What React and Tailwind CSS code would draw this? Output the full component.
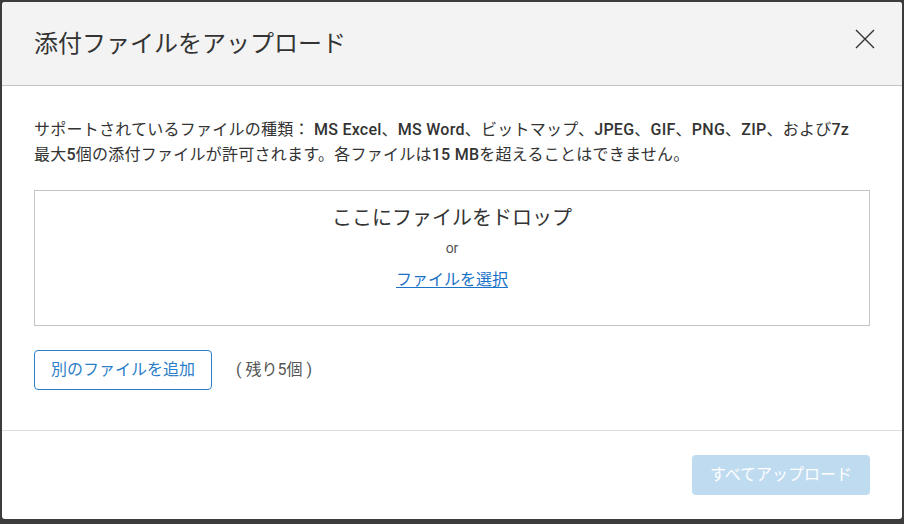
export default function App() {
  const font = "font-['Roboto','Noto_Sans_CJK_JP',sans-serif]";
  return (
    <div className={`w-[904px] h-[524px] bg-[#3c3c3c] pt-[2px] pl-[2px] ${font}`}>
      <div className="w-[900px] h-[517px] bg-white rounded-[3px] overflow-hidden flex flex-col">
        <div className="h-[84px] shrink-0 bg-[#f3f3f3] border-b border-[#c4c4c4] flex items-center justify-between pl-[32px] pr-[26px]">
          <h1 className="text-[24px] text-[#333] font-normal leading-none mt-[1px]">添付ファイルをアップロード</h1>
          <svg width="22" height="22" viewBox="0 0 22 22" className="-mt-[10px]" aria-label="閉じる">
            <path d="M2 2 L20 20 M20 2 L2 20" stroke="#333" strokeWidth="1.4" fill="none" />
          </svg>
        </div>
        <div className="pt-[31px] px-[32px] pb-[40px] border-b border-[#dddddd]">
          <div className="text-[16px] leading-[25px] text-[#333] tracking-[0.25px]">
            <p>
              サポートされているファイルの種類： <b className="font-medium">MS Excel</b>、<b className="font-medium">MS Word</b>、ビットマップ、<b className="font-medium">JPEG</b>、<b className="font-medium">GIF</b>、<b className="font-medium">PNG</b>、<b className="font-medium">ZIP</b>、および<b className="font-medium">7z</b>
            </p>
            <p>
              最大<b className="font-medium">5</b>個の添付ファイルが許可されます。各ファイルは<b className="font-medium">15 MB</b>を超えることはできません。
            </p>
          </div>
          <div className="mt-[23px] h-[136px] border border-[#c4c4c4] flex flex-col items-center pt-[13px]">
            <div className="text-[20px] leading-[28px] text-[#333]">ここにファイルをドロップ</div>
            <div className="mt-[6px] text-[14px] leading-[20px] text-[#555]">or</div>
            <a href="#" className="mt-[12px] text-[16px] leading-[20px] text-[#1a73c7] underline underline-offset-2">ファイルを選択</a>
          </div>
          <div className="mt-[24px] flex items-center">
            <button className="w-[178px] h-[40px] border border-[#2b7ec8] rounded-[4px] text-[#2b7ec8] text-[16px] bg-white">別のファイルを追加</button>
            <span className="ml-[24px] text-[16px] text-[#555]">( 残り5個 )</span>
          </div>
        </div>
        <div className="flex justify-end px-[32px] pt-[24px]">
          <button className="w-[178px] h-[40px] rounded-[4px] bg-[#bfdbf0] text-white text-[16px]">すべてアップロード</button>
        </div>
      </div>
    </div>
  );
}
